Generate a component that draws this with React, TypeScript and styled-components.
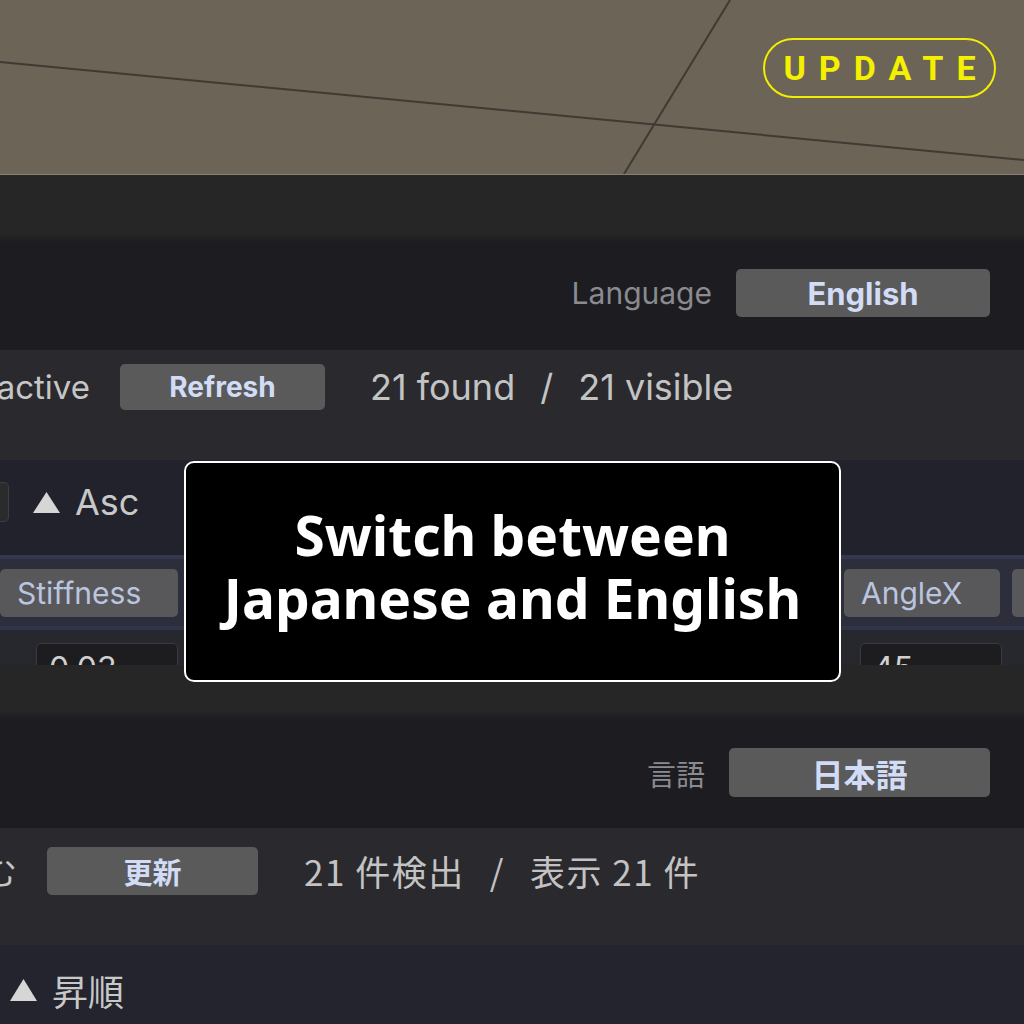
import React from "react";
import styled, { createGlobalStyle } from "styled-components";

const UI_FONT = `Inter, "Noto Sans CJK JP", "DejaVu Sans", sans-serif`;
const JP_FONT = `"Noto Sans CJK JP", Inter, sans-serif`;

const GlobalStyle = createGlobalStyle`
  html, body {
    margin: 0;
    padding: 0;
    background: #1c1c21;
  }
  * {
    box-sizing: border-box;
  }
`;

const Frame = styled.div`
  position: relative;
  width: 1024px;
  height: 1024px;
  overflow: hidden;
  display: flex;
  flex-direction: column;
  font-family: ${UI_FONT};
`;

const Viewport = styled.div`
  position: relative;
  flex: 0 0 175px;
  background: #6b6457;
  border-bottom: 1px solid #878174;
`;

const Grid = styled.svg`
  display: block;
`;

const Badge = styled.div`
  position: absolute;
  top: 38px;
  left: 763px;
  width: 233px;
  height: 60px;
  border: 2px solid #f2ee00;
  border-radius: 30px;
  display: flex;
  align-items: center;
  justify-content: center;
  color: #f4f000;
  font-family: Roboto, "Liberation Sans", sans-serif;
  font-weight: 700;
  font-size: 34px;
  letter-spacing: 13px;
  padding-left: 13px;
`;

const PanelHeader = styled.div<{ $h: number }>`
  flex: 0 0 ${(p) => p.$h}px;
  background: linear-gradient(to bottom, #262626 0, #262626 calc(100% - 9px), #1c1c21 100%);
`;

const LangBar = styled.div<{ $h: number; $top: number }>`
  flex: 0 0 ${(p) => p.$h}px;
  display: flex;
  justify-content: flex-end;
  align-items: flex-start;
  padding: ${(p) => p.$top}px 34px 0 0;
  background: #1c1c21;
`;

const LangGroup = styled.div`
  display: flex;
  align-items: center;
  gap: 24px;
`;

const DimLabel = styled.span<{ $size: number; $jp?: boolean }>`
  color: #8a8a8f;
  font-size: ${(p) => p.$size}px;
  font-family: ${(p) => (p.$jp ? JP_FONT : UI_FONT)};
  white-space: nowrap;
`;

const Chip = styled.button<{ $w: number; $h: number; $size: number; $jp?: boolean; $bold?: boolean }>`
  flex: 0 0 ${(p) => p.$w}px;
  width: ${(p) => p.$w}px;
  height: ${(p) => p.$h}px;
  padding: 0 16px;
  border: none;
  border-radius: 5px;
  background: #5a5a5b;
  color: #d2dcf6;
  font-family: ${(p) => (p.$jp ? JP_FONT : UI_FONT)};
  font-size: ${(p) => p.$size}px;
  font-weight: ${(p) => (p.$bold ? 700 : 400)};
  white-space: nowrap;
  overflow: hidden;
  display: flex;
  align-items: center;
  justify-content: center;
`;

const StatusBar = styled.div<{ $h: number; $top: number }>`
  flex: 0 0 ${(p) => p.$h}px;
  display: flex;
  align-items: flex-start;
  padding-top: ${(p) => p.$top}px;
  background: #2a2a2e;
`;

const StatusGroup = styled.div<{ $gap: number }>`
  display: flex;
  align-items: center;
  gap: ${(p) => p.$gap}px;
`;

const ClippedLabel = styled.div<{ $w: number; $size: number; $jp?: boolean }>`
  flex: 0 0 ${(p) => p.$w}px;
  width: ${(p) => p.$w}px;
  overflow: hidden;
  display: flex;
  justify-content: flex-end;
  white-space: nowrap;
  color: #c6c6c6;
  font-size: ${(p) => p.$size}px;
  font-family: ${(p) => (p.$jp ? JP_FONT : UI_FONT)};
`;

const Stats = styled.div<{ $size: number; $jp?: boolean; $spacing?: number }>`
  display: flex;
  align-items: center;
  gap: 25px;
  color: #c3c3c3;
  font-size: ${(p) => p.$size}px;
  font-family: ${(p) => (p.$jp ? JP_FONT : UI_FONT)};
  letter-spacing: ${(p) => p.$spacing ?? 0}px;
  white-space: nowrap;
`;

const SortBar = styled.div<{ $h: number; $top: number; $bg: string; $pad: number }>`
  flex: 0 0 ${(p) => p.$h}px;
  display: flex;
  align-items: flex-start;
  padding: ${(p) => p.$top}px 0 0 ${(p) => p.$pad}px;
  background: ${(p) => p.$bg};
`;

const SortGroup = styled.div`
  display: flex;
  align-items: center;
  height: 50px;
`;

const DropdownEdge = styled.div`
  width: 9px;
  height: 40px;
  margin-right: 24px;
  border: 1px solid #3e3e42;
  border-left: none;
  border-radius: 0 5px 5px 0;
  background: #2b2b2e;
`;

const SortLabel = styled.span<{ $size: number; $jp?: boolean }>`
  margin-left: 15px;
  color: #c8c8c8;
  font-size: ${(p) => p.$size}px;
  font-family: ${(p) => (p.$jp ? JP_FONT : UI_FONT)};
`;

const ParamBar = styled.div`
  flex: 0 0 75px;
  display: flex;
  align-items: center;
  gap: 12px;
  background: #2d2e3c;
  border-top: 4px solid #35374f;
  border-bottom: 4px solid #313349;
  overflow: hidden;
`;

const ParamChip = styled.div<{ $w: number }>`
  flex: 0 0 ${(p) => p.$w}px;
  height: 48px;
  padding-left: 17px;
  border-radius: 5px;
  background: #58585a;
  color: #bac5e0;
  font-size: 30px;
  display: flex;
  align-items: center;
  white-space: nowrap;
  overflow: hidden;
`;

const InputBar = styled.div`
  flex: 0 0 35px;
  display: flex;
  align-items: flex-start;
  padding: 13px 22px 0 36px;
  background: #27272e;
  overflow: hidden;
`;

const ValueField = styled.div<{ $push?: boolean }>`
  flex: 0 0 142px;
  height: 46px;
  margin-left: ${(p) => (p.$push ? "auto" : "0")};
  padding: 7px 12px;
  border: 1px solid #3a3a40;
  border-radius: 5px;
  background: #1d1d20;
  color: #d0d0d0;
  font-size: 32px;
  line-height: 1.1;
`;

const Caption = styled.div`
  position: absolute;
  left: 184px;
  top: 461px;
  width: 657px;
  height: 221px;
  padding-bottom: 12px;
  border: 2px solid #ffffff;
  border-radius: 10px;
  background: #000000;
  display: flex;
  align-items: center;
  justify-content: center;
  text-align: center;
  color: #ffffff;
  font-family: "Noto Sans", "Open Sans", sans-serif;
  font-weight: 700;
  font-size: 55px;
  line-height: 63px;
`;

const Triangle: React.FC<{ w: number; h: number }> = ({ w, h }) => (
  <svg width={w} height={h} viewBox={`0 0 ${w} ${h}`}>
    <polygon points={`${w / 2},0 ${w},${h} 0,${h}`} fill="#d6d6d6" />
  </svg>
);

// columns hidden behind the caption card
const hiddenParams = ["damping", "gravity", "radius"];

const App: React.FC = () => {
  return (
    <>
      <GlobalStyle />
      <Frame>
        <Viewport>
          <Grid width={1024} height={174} viewBox="0 0 1024 174">
            <line x1={0} y1={62} x2={1024} y2={160} stroke="#3f3a32" strokeWidth={2} />
            <line x1={730} y1={0} x2={624} y2={174} stroke="#3f3a32" strokeWidth={2} />
          </Grid>
          <Badge>UPDATE</Badge>
        </Viewport>

        <PanelHeader $h={68} />

        <LangBar $h={107} $top={26}>
          <LangGroup>
            <DimLabel $size={30}>Language</DimLabel>
            <Chip $w={254} $h={48} $size={31} $bold>
              English
            </Chip>
          </LangGroup>
        </LangBar>

        <StatusBar $h={110} $top={14}>
          <StatusGroup $gap={30}>
            <ClippedLabel $w={90} $size={33}>
              Include inactive
            </ClippedLabel>
            <StatusGroup $gap={45}>
              <Chip $w={205} $h={46} $size={28} $bold>
                Refresh
              </Chip>
              <Stats $size={36}>
                <span>21 found</span>
                <span>/</span>
                <span>21 visible</span>
              </Stats>
            </StatusGroup>
          </StatusGroup>
        </StatusBar>

        <SortBar $h={95} $top={17} $bg="#21222b" $pad={0}>
          <SortGroup>
            <DropdownEdge />
            <Triangle w={27} h={21} />
            <SortLabel $size={36}>Asc</SortLabel>
          </SortGroup>
        </SortBar>

        <ParamBar>
          <ParamChip $w={178}>Stiffness</ParamChip>
          {hiddenParams.map((id) => (
            <ParamChip key={id} $w={206} />
          ))}
          <ParamChip $w={156}>AngleX</ParamChip>
          <ParamChip $w={200} />
        </ParamBar>

        <InputBar>
          <ValueField>0.03</ValueField>
          <ValueField $push>45</ValueField>
        </InputBar>

        <PanelHeader $h={55} />

        <LangBar $h={108} $top={28}>
          <LangGroup>
            <DimLabel $size={29} $jp>
              言語
            </DimLabel>
            <Chip $w={261} $h={49} $size={32} $jp $bold>
              日本語
            </Chip>
          </LangGroup>
        </LangBar>

        <StatusBar $h={117} $top={17}>
          <StatusGroup $gap={30}>
            <ClippedLabel $w={17} $size={34} $jp>
              非アクティブを含む
            </ClippedLabel>
            <StatusGroup $gap={46}>
              <Chip $w={211} $h={48} $size={29} $jp $bold>
                更新
              </Chip>
              <Stats $size={35} $jp $spacing={1.5}>
                <span>21 件検出</span>
                <span>/</span>
                <span>表示 21 件</span>
              </Stats>
            </StatusGroup>
          </StatusGroup>
        </StatusBar>

        <SortBar $h={79} $top={20} $bg="#23242e" $pad={10}>
          <SortGroup>
            <Triangle w={27} h={22} />
            <SortLabel $size={36} $jp>
              昇順
            </SortLabel>
          </SortGroup>
        </SortBar>

        <Caption>
          Switch between
          <br />
          Japanese and English
        </Caption>
      </Frame>
    </>
  );
};

export default App;
